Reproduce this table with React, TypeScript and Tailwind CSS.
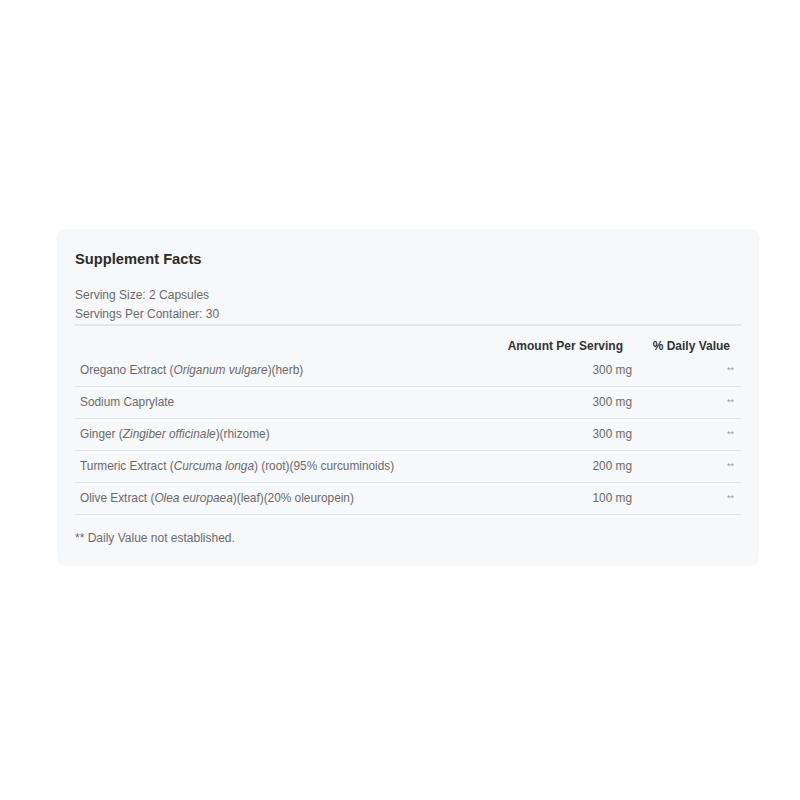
const rows = [
    { name: "Oregano Extract (", latin: "Origanum vulgare", rest: ")(herb)", amount: "300 mg" },
    { name: "Sodium Caprylate", latin: "", rest: "", amount: "300 mg" },
    { name: "Ginger (", latin: "Zingiber officinale", rest: ")(rhizome)", amount: "300 mg" },
    { name: "Turmeric Extract (", latin: "Curcuma longa", rest: ") (root)(95% curcuminoids)", amount: "200 mg" },
    { name: "Olive Extract (", latin: "Olea europaea", rest: ")(leaf)(20% oleuropein)", amount: "100 mg" },
];

export default function App() {
    return (
        <main className="min-h-[800px] w-[800px] bg-white pt-[229px] pl-[57px] font-['Liberation_Sans',Arial,sans-serif]">
            <section className="w-[702px] rounded-lg bg-[#f7f8fa] px-[18px] pt-[20px] pb-[20px]">
                <h2 className="text-[14.7px] leading-[20px] font-bold text-[#2b2b2b]">Supplement Facts</h2>
                <div className="mt-[17px] border-b-2 border-[#e6e7ea] text-[12px] leading-[19px] text-[#6b6b6b]">
                    <div>Serving Size: 2 Capsules</div>
                    <div>Servings Per Container: 30</div>
                </div>
                <div className="grid grid-cols-[1fr_150px_100px] pt-[12px] pb-[1px] text-[12px] leading-[16px] font-bold text-[#333]">
                    <div />
                    <div className="pr-[18px] text-right">Amount Per Serving</div>
                    <div className="pr-[11px] text-right">% Daily Value</div>
                </div>
                {rows.map((r) => (
                    <div key={r.name} className="grid h-[32px] grid-cols-[1fr_150px_100px] items-center border-b border-[#e4e5e8] text-[11.85px] text-[#6a6a6a]">
                        <div className="pl-[5px]">
                            {r.name}
                            {r.latin && <i>{r.latin}</i>}
                            {r.rest}
                        </div>
                        <div className="pr-[9px] text-right">{r.amount}</div>
                        <div className="pr-[7px] text-right text-[9px] text-[#999]">**</div>
                    </div>
                ))}
                <p className="mt-[15px] text-[12px] leading-[16px] text-[#6b6b6b]">** Daily Value not established.</p>
            </section>
        </main>
    );
}
